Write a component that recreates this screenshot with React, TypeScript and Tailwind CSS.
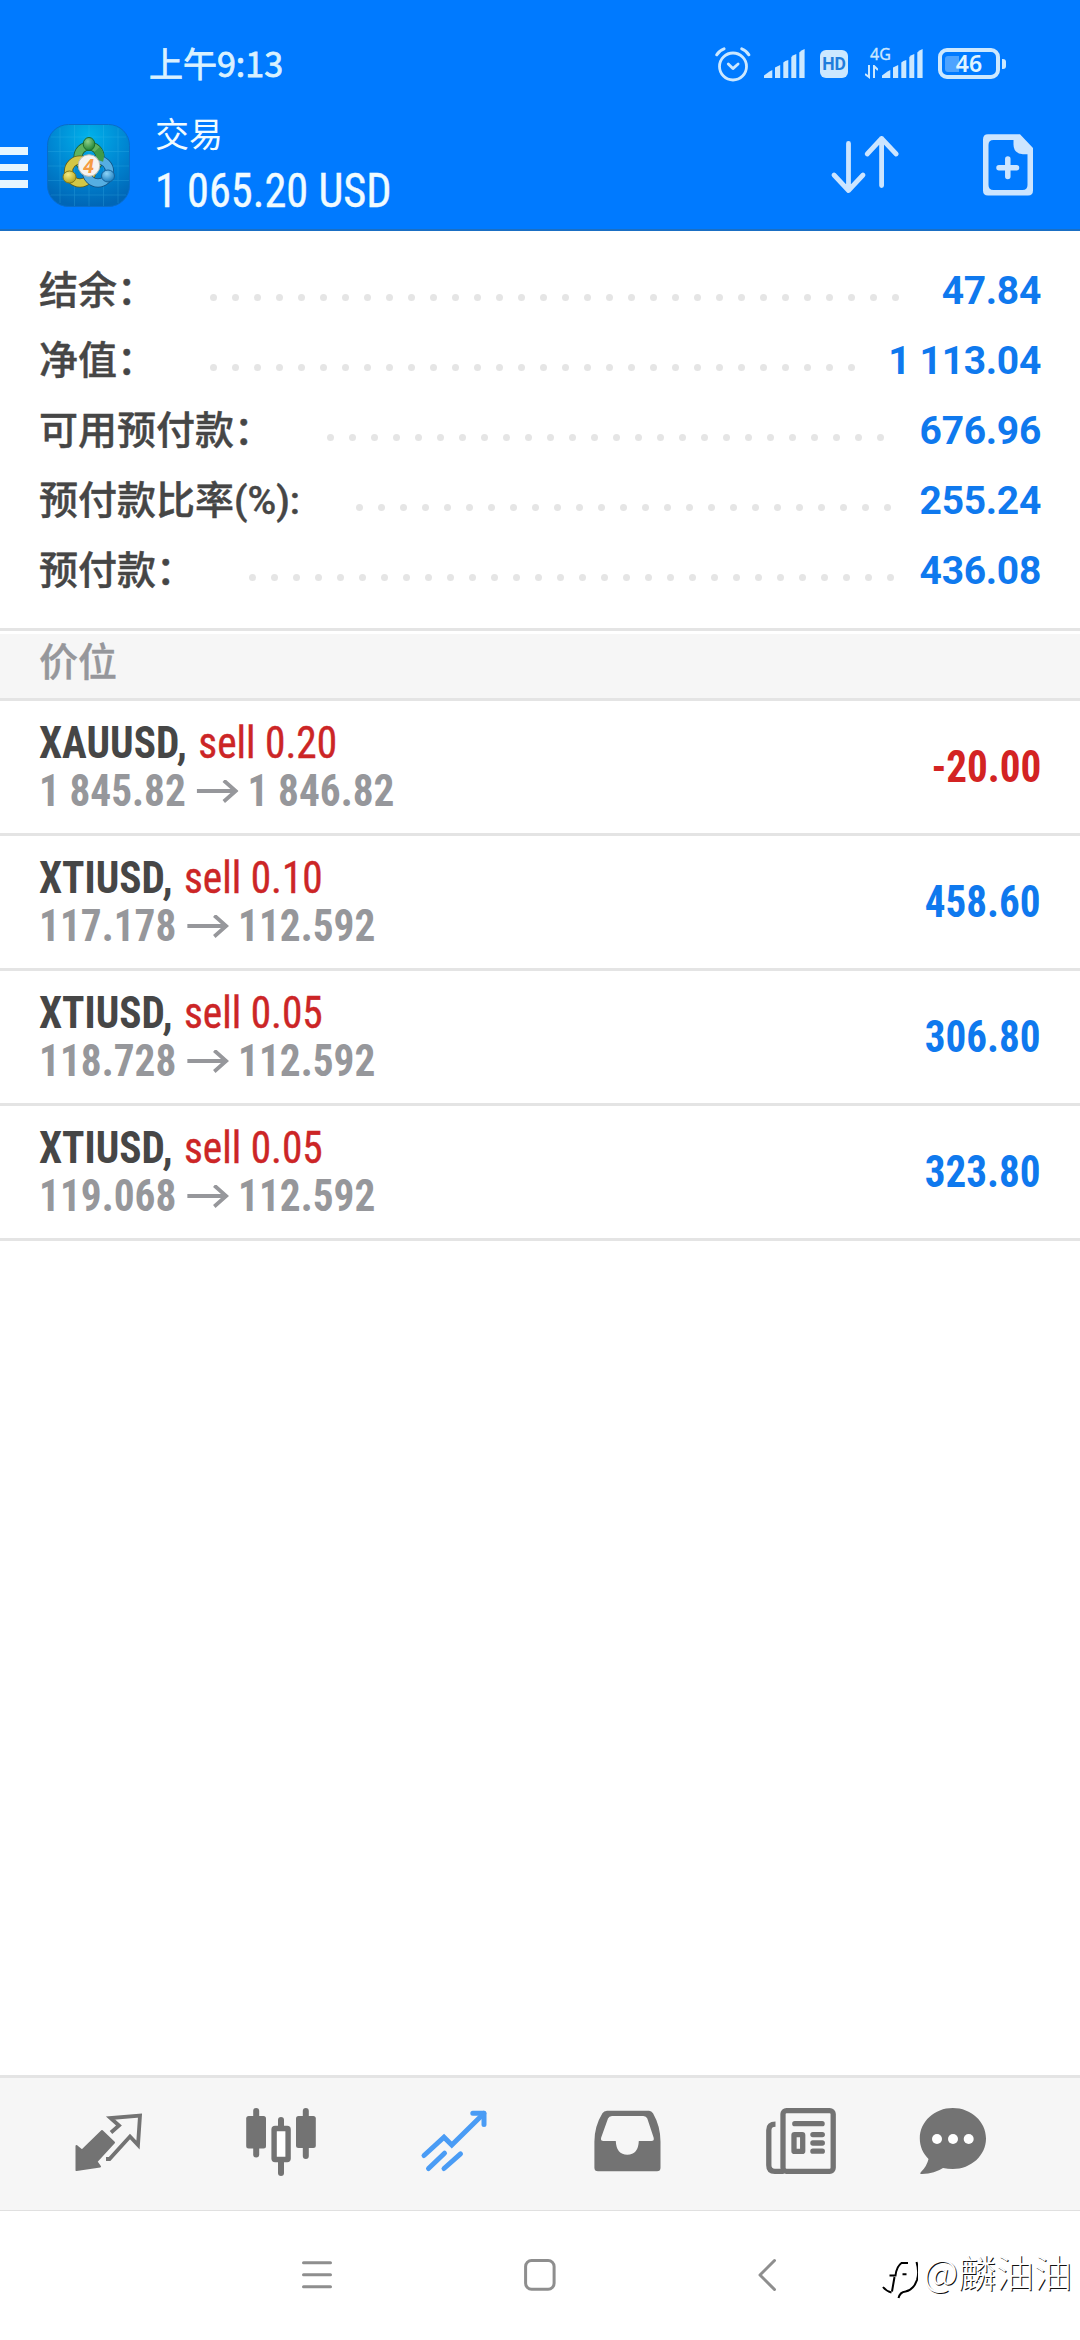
import type { ReactNode } from "react";

type Summary = { label: string; labelWidth: string; dots: number; value: string };

type Position = {
  symbol: string;
  side: string;
  open: string;
  current: string;
  profit: string;
};

const summary: Summary[] = [
  { label: "结余：", labelWidth: "w-[171px]", dots: 32, value: "47.84" },
  { label: "净值：", labelWidth: "w-[171px]", dots: 30, value: "1 113.04" },
  { label: "可用预付款：", labelWidth: "w-[288px]", dots: 26, value: "676.96" },
  { label: "预付款比率(%):", labelWidth: "w-[317px]", dots: 25, value: "255.24" },
  { label: "预付款：", labelWidth: "w-[210px]", dots: 30, value: "436.08" },
];

const positions: Position[] = [
  { symbol: "XAUUSD", side: "sell 0.20", open: "1 845.82", current: "1 846.82", profit: "-20.00" },
  { symbol: "XTIUSD", side: "sell 0.10", open: "117.178", current: "112.592", profit: "458.60" },
  { symbol: "XTIUSD", side: "sell 0.05", open: "118.728", current: "112.592", profit: "306.80" },
  { symbol: "XTIUSD", side: "sell 0.05", open: "119.068", current: "112.592", profit: "323.80" },
];

function SignalBars() {
  return (
    <svg className="h-[30px] w-[41px]" viewBox="0 0 41 30" fill="#cce8ff">
      <path d="M0 29v-2.5L5.500 22.500 8.300 21V29z" />
      <path d="M11 29V18.500L16.200 16V29z" />
      <path d="M19.300 29V13.500Q21 11.500 24.300 11V29z" />
      <path d="M27.300 29V8Q29 6 32.300 5V29z" />
      <path d="M35.300 29V3.500Q37 1 40.600 0V29z" />
    </svg>
  );
}

function StatusBar() {
  return (
    <div className="flex h-[112px] items-start pl-[149px]">
      <span className="mt-[38px] font-['Noto_Sans_CJK_SC',sans-serif] text-[34px] leading-[50px] text-[#d9f1ff] [-webkit-text-stroke:0.8px_#d9f1ff]">
        上午9:13
      </span>
      <svg className="mt-[46px] ml-auto h-[36px] w-[36px] shrink-0" viewBox="715 46 36 36" fill="none" stroke="#cce8ff" strokeLinecap="round" strokeLinejoin="round">
        <circle cx="733" cy="66.500" r="13.500" strokeWidth="2.800" />
        <path d="M716.800 54.800Q719 50.500 724 48.800M741.800 48.800Q746.500 50.500 748.800 54.800" strokeWidth="3" />
        <path d="m728.300 64 4.600 4.600 5.200-4.600" strokeWidth="2.800" />
      </svg>
      <div className="mt-[49px] ml-[13px] flex">
        <SignalBars />
      </div>
      <span className="mt-[50px] ml-[15px] flex h-[28px] w-[28px] items-center justify-center rounded-[6px] bg-[#cce8ff] font-['Roboto',sans-serif] text-[17.500px] font-bold text-[#1f7ddc]">
        HD
      </span>
      <div className="mt-[44px] ml-[17px] w-[23px] shrink-0">
        <div className="pl-[5px] font-['Noto_Sans',sans-serif] text-[16px] leading-[20px] text-[#cce8ff] [-webkit-text-stroke:0.3px_#cce8ff]">4G</div>
        <svg className="mt-px h-[14px] w-[13px]" viewBox="0 0 13 14" fill="none" stroke="#cce8ff" strokeWidth="2">
          <path d="M4 0v12L0 9M9 13V1l4 4" />
        </svg>
      </div>
      <div className="mt-[49px] ml-[-6px] flex">
        <SignalBars />
      </div>
      <div className="mt-[48px] mr-[74px] ml-[15px] flex items-center">
        <div className="relative flex h-[31px] w-[62px] items-center justify-center rounded-[9px] border-[4px] border-[#cce8ff]">
          <span className="absolute top-[4px] left-[3px] h-[16px] w-[14px] rounded-l-[3px] bg-[#4da3ff]" />
          <span className="relative font-['Noto_Sans',sans-serif] text-[23px] leading-none font-semibold text-[#e0f5ff]">46</span>
        </div>
        <span className="ml-[2px] h-[10px] w-[4px] rounded-r-[3px] bg-[#cce8ff]" />
      </div>
    </div>
  );
}

function AppLogo() {
  return (
    <svg className="h-[83px] w-[83px] shrink-0" viewBox="0 0 83 83">
      <defs>
        <radialGradient id="sky" cx="0.500" cy="0.150" r="0.850">
          <stop offset="0" stopColor="#00b1ea" />
          <stop offset="0.550" stopColor="#0086d2" />
          <stop offset="1" stopColor="#0066b6" />
        </radialGradient>
        <radialGradient id="green" cx="0.400" cy="0.300" r="0.700">
          <stop offset="0" stopColor="#8fd08a" />
          <stop offset="1" stopColor="#1f8434" />
        </radialGradient>
        <radialGradient id="yellow" cx="0.400" cy="0.300" r="0.700">
          <stop offset="0" stopColor="#f3ec84" />
          <stop offset="1" stopColor="#b5a51f" />
        </radialGradient>
        <radialGradient id="blue" cx="0.400" cy="0.300" r="0.700">
          <stop offset="0" stopColor="#8dd3f7" />
          <stop offset="1" stopColor="#1c7fc0" />
        </radialGradient>
      </defs>
      <rect x="0.500" y="0.500" width="82" height="82" rx="21" fill="url(#sky)" stroke="#0a6cc8" />
      <path d="M13 4v75M27.500 1v81M42 1v81M56.500 1v81M71 4v75M4 13h75M1 27.500h81M1 42h81M1 56.500h81M4 71h75" stroke="#4cc4f0" strokeWidth="0.700" opacity="0.300" />
      <circle cx="42" cy="33" r="11" fill="none" stroke="#1c5a2a" strokeWidth="9" />
      <circle cx="42" cy="33" r="11" fill="none" stroke="#5fb35f" strokeWidth="7.500" />
      <circle cx="33" cy="47.500" r="11.500" fill="none" stroke="#5c5a1a" strokeWidth="9" />
      <circle cx="33" cy="47.500" r="11.500" fill="none" stroke="#d3c746" strokeWidth="7.500" />
      <circle cx="51" cy="47.500" r="11.500" fill="none" stroke="#124f80" strokeWidth="9" />
      <circle cx="51" cy="47.500" r="11.500" fill="none" stroke="#55aee2" strokeWidth="7.500" />
      <path d="M50 25.500a11 11 0 0 1 2.500 11" fill="none" stroke="#3f9a48" strokeWidth="7.500" />
      <ellipse cx="42" cy="20" rx="5.800" ry="6.500" fill="url(#green)" stroke="#1c6a2a" />
      <ellipse cx="22.500" cy="53" rx="6.500" ry="6" fill="url(#yellow)" stroke="#857a18" />
      <ellipse cx="61" cy="52" rx="6.500" ry="6" fill="url(#blue)" stroke="#14609a" />
      <circle cx="42" cy="41.500" r="10.800" fill="#f5f3f1" stroke="#b9b9b0" />
      <text x="41.500" y="48.500" textAnchor="middle" fontSize="20" fontWeight="700" fontStyle="italic" fontFamily="Roboto, sans-serif" fill="#f59b42">
        4
      </text>
    </svg>
  );
}

function TitleBar() {
  return (
    <div className="flex h-[119px] items-start border-b-2 border-[#1a6fc4]">
      <div className="mt-[35px] flex w-[28px] shrink-0 flex-col gap-[9px]">
        <span className="h-[7.500px] bg-[#e6f6ff]" />
        <span className="h-[7.500px] bg-[#e6f6ff]" />
        <span className="h-[7.500px] bg-[#e6f6ff]" />
      </div>
      <div className="mt-[12px] ml-[19px]">
        <AppLogo />
      </div>
      <div className="ml-[25px] text-[#f0fbff]">
        <div className="mt-[-4px] font-['Noto_Sans_CJK_SC',sans-serif] text-[34px] leading-[50px]">交易</div>
        <div className="mt-[5px] origin-left scale-x-[0.924] font-['Roboto_Condensed','Roboto',sans-serif] text-[48px] leading-[56px] whitespace-nowrap [-webkit-text-stroke:0.4px_#f0fbff] [font-stretch:75%]">
          1 065.20 USD
        </div>
      </div>
      <svg className="mt-[20px] ml-auto h-[66px] w-[72px]" viewBox="828 132 72 66" fill="none" stroke="#cce5ff" strokeWidth="4.800" strokeLinecap="round" strokeLinejoin="round">
        <path d="M848.500 143.500v47M834 175l14.500 15.500L863 175M881.600 185.500v-47M867.200 154l14.400-15.500L896.200 154" />
      </svg>
      <svg className="mt-[20px] mr-[42px] ml-[78px] h-[66px] w-[60px]" viewBox="978 132 60 66">
        <path
          fill="#cce5ff"
          fillRule="evenodd"
          d="M988 134.300h32L1033 148v42.500q0 5-5 5h-40q-5 0-5-5v-51q0-5.200 5-5.200zM993.500 140q-5 0-5 5v40q0 5 5 5h29q5 0 5-5v-30.700h-4.500q-10-1-9.500-11v-3.300z"
        />
        <path d="M999 167.700h17.500M1007.800 159v17.500" stroke="#cce5ff" strokeWidth="5.500" strokeLinecap="round" />
      </svg>
    </div>
  );
}

function SummaryRow({ label, labelWidth, dots, value }: Summary) {
  return (
    <div className="flex h-[70px] items-center pr-[39px] pl-[39px]">
      <span className={`${labelWidth} mt-px shrink-0 font-['Roboto','Noto_Sans_CJK_SC',sans-serif] text-[39px] leading-[70px] font-medium whitespace-nowrap text-[#464646] [-webkit-text-stroke:0.4px_#464646]`}>
        {label}
      </span>
      <div className="mt-[14px] flex gap-[15px]">
        {Array.from({ length: dots }, (_, i) => (
          <span key={i} className="h-[7px] w-[7px] rounded-full bg-[#e5e5e5]" />
        ))}
      </div>
      <span className="mt-[2px] ml-auto font-['Roboto',sans-serif] text-[39px] font-bold tracking-[-0.300px] whitespace-nowrap text-[#0f79ee]">{value}</span>
    </div>
  );
}

function PositionRow({ symbol, side, open, current, profit }: Position) {
  return (
    <div className="flex h-[135px] items-center justify-between border-b-[3px] border-[#e4e4e4] px-[39px] pt-px font-['Roboto_Condensed','Roboto',sans-serif] text-[43.500px] leading-[48px] whitespace-nowrap [font-stretch:75%]">
      <div className="origin-left scale-x-[0.950]">
        <div>
          <span className="mr-[2px] font-bold text-[#464646]">{symbol},</span>{" "}
          <span className="text-[#cc2526] [-webkit-text-stroke:0.4px_#cc2526]">{side}</span>
        </div>
        <div className="flex items-center font-bold text-[#96979b]">
          {open}
          <svg className="mr-[10px] ml-[11px] h-[24px] w-[44px]" viewBox="0 0 44 24" fill="none" stroke="#96979b" strokeWidth="4">
            <path d="M0 11h41M28.500 0.500 41 11 28.500 21.500" />
          </svg>
          {current}
        </div>
      </div>
      <span className={`origin-right scale-x-[0.945] font-bold ${profit.startsWith("-") ? "text-[#d32323]" : "text-[#0f79ee]"}`}>{profit}</span>
    </div>
  );
}

function Tab({ viewBox, children }: { viewBox: string; children: ReactNode }) {
  return (
    <button type="button" className="h-[132px] w-[173px]">
      <svg className="h-[132px] w-[173px]" viewBox={viewBox} fill="#737373">
        {children}
      </svg>
    </button>
  );
}

function TabBar() {
  return (
    <nav className="flex h-[136px] border-t-[3px] border-b border-t-[#e4e4e4] border-b-[#e0e0e0] bg-[#f6f6f6] pl-[22px]">
      <Tab viewBox="22 2078 173 132">
        <path d="M76.500 2146l5.500 4.500L102 2131l12 11.500-17.500 19 3.500 5L76.500 2170z" stroke="#737373" strokeWidth="2" strokeLinejoin="round" />
        <path d="M111 2132.500l8-7-8.500-7.500 29.500-2.500-2 29.500-8-8.500-20.500 22.500h-3.500" fill="none" stroke="#737373" strokeWidth="3.800" />
      </Tab>
      <Tab viewBox="195 2078 173 132">
        <rect x="253.200" y="2108" width="6" height="49.500" rx="3" />
        <rect x="246.200" y="2116" width="19.800" height="32.500" rx="2.500" />
        <rect x="302.800" y="2108" width="6" height="51" rx="3" />
        <rect x="296" y="2116" width="19.800" height="32" rx="2.500" />
        <rect x="278" y="2117" width="6" height="12" rx="3" />
        <rect x="278" y="2158" width="6" height="18" rx="3" />
        <rect x="274.100" y="2128.500" width="14" height="31" rx="1" fill="#fff" stroke="#737373" strokeWidth="5.400" />
      </Tab>
      <Tab viewBox="368 2078 173 132">
        <g fill="none" stroke="#4a9cf5" strokeWidth="5" strokeLinecap="round" strokeLinejoin="round">
          <path d="M424 2155.500l20-18.300 7.800 7.800 32-31.500" strokeLinejoin="miter" />
          <path d="M472.800 2113.300h11.200v11.200" />
          <path d="M428.500 2168.500l16-15.300M444 2168.500l16.500-14.700" />
        </g>
      </Tab>
      <Tab viewBox="541 2078 173 132">
        <path
          fillRule="evenodd"
          d="M607 2110.700h42q2.500 0 4 2.500 7.500 13 7.500 28.500v26q0 3.600-3.500 3.600h-59q-3.600 0-3.600-3.600v-26q0-15.500 8-28.500 1.500-2.500 4.600-2.500zM612 2116q-3 0-4 2.500l-6.800 19q-1 3.500 2.300 3.500h12.300q.5 13.700 11.500 13.700t11.500-13.700h12.500q3.300 0 2.300-3.500l-6.300-19q-1-2.500-4-2.500z"
        />
      </Tab>
      <Tab viewBox="714 2078 173 132">
        <g fill="none" stroke="#737373" strokeWidth="5.300">
          <rect x="783" y="2110.600" width="50.200" height="60.700" rx="3.500" />
          <path d="M775.500 2124.200q-6.700 0-6.700 6v35q0 6.100 6 6.100h9" />
          <path d="M794.800 2123.700h27.300M812.900 2134.600h9.400M812.900 2143h9.400M812.900 2151.200h9.400" strokeLinecap="round" />
          <rect x="794" y="2134.600" width="8.700" height="16.800" rx="0.500" />
        </g>
      </Tab>
      <Tab viewBox="887 2078 173 132">
        <path d="M928.500 2159c-5.500-5.500-8.700-12.500-8.700-20.500 0-17 14.700-30.500 33-30.500s33.200 13.500 33.200 30.500-15 30.500-33.200 30.500q-5 0-9.800-1-8 5.500-21 6-3 0-1-2 6-6 7.500-13z" />
        <circle cx="937" cy="2139" r="5" fill="#fff" />
        <circle cx="953" cy="2139" r="5" fill="#fff" />
        <circle cx="968.700" cy="2139" r="5" fill="#fff" />
      </Tab>
    </nav>
  );
}

function SystemNav() {
  return (
    <div className="flex h-[129px] items-start pt-[46px] pl-[300px]">
      <svg className="h-[36px] w-[34px]" viewBox="300 2257 34 36" stroke="#8e8e8e" strokeWidth="3" strokeLinecap="round">
        <path d="M303.500 2262.700h27M303.500 2274.700h27M303.500 2286.700h27" />
      </svg>
      <svg className="ml-[188px] h-[36px] w-[36px]" viewBox="522 2257 36 36" fill="none" stroke="#8e8e8e" strokeWidth="3">
        <rect x="525.600" y="2260.500" width="28.500" height="28.700" rx="6" />
      </svg>
      <svg className="ml-[199px] h-[36px] w-[22px]" viewBox="757 2257 22 36" fill="none" stroke="#8e8e8e" strokeWidth="3" strokeLinecap="round" strokeLinejoin="round">
        <path d="M774.500 2260.500 760 2275l14.500 14.500" />
      </svg>
    </div>
  );
}

function Watermark() {
  return (
    <div className="absolute right-[8px] bottom-[40px] flex items-center">
      <svg className="mt-[18px] mr-[5px] h-[40px] w-[36px]" viewBox="881 2265 36 40" fill="none" stroke="#000" strokeWidth="2">
        <path d="M888.500 2280.500h6q1-9 6-12.500h6.500M893.500 2282l-2.500 14.500M901.500 2279.300h4" />
        <path d="M882 2292q3 4 8.500 5.500M915.500 2267q3 10 .5 18-3.500 10-11.500 11.500-5.500.5-7 6.500" />
      </svg>
      <span className="font-['Noto_Sans_CJK_SC',sans-serif] text-[38px] leading-[44px] font-light text-white [text-shadow:1px_1px_0_#111]">
        @麟油油
      </span>
    </div>
  );
}

export default function App() {
  return (
    <div className="relative flex h-[2340px] w-[1080px] flex-col overflow-hidden bg-white">
      <header className="bg-[#007aff]">
        <StatusBar />
        <TitleBar />
      </header>
      <section className="h-[400px] border-b-[3px] border-[#e4e4e4] pt-[24px]">
        {summary.map((row) => (
          <SummaryRow key={row.label} {...row} />
        ))}
      </section>
      <div className="mt-[3px] h-[67px] border-b-[3px] border-[#e4e4e4] bg-[#f6f6f6] pl-[39px] font-['Noto_Sans_CJK_SC',sans-serif] text-[39px] leading-[50px] font-medium text-[#96979b] [-webkit-text-stroke:0.4px_#96979b]">
        价位
      </div>
      <main className="flex-1">
        {positions.map((p) => (
          <PositionRow key={p.open} {...p} />
        ))}
      </main>
      <TabBar />
      <SystemNav />
      <Watermark />
    </div>
  );
}
